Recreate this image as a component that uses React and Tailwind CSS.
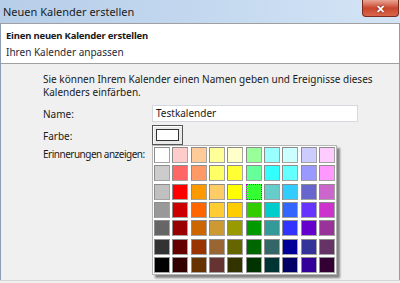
import React from "react";

const rows = [
  ["#ffffff", "#ffcccc", "#ffcc99", "#ffff99", "#ffffcc", "#99ff99", "#99ffff", "#ccffff", "#ccccff", "#ffccff"],
  ["#cccccc", "#ff6666", "#ff9966", "#ffff66", "#ffff33", "#66ff99", "#33ffff", "#66ffff", "#9999ff", "#ff99ff"],
  ["#c0c0c0", "#ff0000", "#ff9900", "#ffcc66", "#ffff00", "#33ff33", "#66cccc", "#33ccff", "#6666cc", "#cc66cc"],
  ["#999999", "#cc0000", "#ff6600", "#ffcc33", "#ffcc00", "#33cc00", "#00cccc", "#3366ff", "#6633ff", "#cc33cc"],
  ["#666666", "#990000", "#cc6600", "#cc9933", "#999900", "#009900", "#339999", "#3333ff", "#6600cc", "#993399"],
  ["#333333", "#660000", "#993300", "#996633", "#666600", "#006600", "#336666", "#000099", "#333399", "#663366"],
  ["#000000", "#330000", "#663300", "#663333", "#333300", "#003300", "#003333", "#000066", "#330099", "#330033"],
];

export default function App() {
  return (
    <div
      className="relative w-[400px] h-[283px] overflow-hidden bg-[#f0f0f0] text-[#1a1a1a]"
      style={{ fontFamily: '"Noto Sans", "Segoe UI", sans-serif' }}
    >
      {/* Title bar */}
      <div className="flex h-[23px] items-start justify-between bg-gradient-to-r from-[#b7cee9] via-[#c3d8ef] to-[#d4e4f5]">
        <span className="pl-[3px] pt-[5px] text-[11px] leading-[14px] text-[#1c1c1c]">
          Neuen Kalender erstellen
        </span>
        <div className="mr-[1px] flex h-[17px] w-[37px] items-center justify-center rounded-b-[4px] border border-t-0 border-[#7a2b1e] bg-gradient-to-b from-[#e8a596] via-[#c9452d] to-[#d8664b] text-[11px] font-bold leading-none text-white [text-shadow:0_0_2px_#5a1a10]">
          ✕
        </div>
      </div>

      {/* Main frame */}
      <div className="flex h-[257px] flex-col border-x border-[#8d9db3]">
        {/* Header */}
        <div className="h-[41px] border-y border-[#a0a0a0] bg-white px-[5px] pt-[4px]">
          <div className="text-[9.5px] font-bold tracking-[-0.2px] leading-[16px]">Einen neuen Kalender erstellen</div>
          <div className="text-[10px] leading-[16px] text-[#1e2a3a]">Ihren Kalender anpassen</div>
        </div>

        {/* Body */}
        <div className="flex-1 pl-[42px] pt-[9px] text-[10px]">
          <p className="leading-[13px]">
            Sie können Ihrem Kalender einen Namen geben und Ereignisse dieses
            <br />
            Kalenders einfärben.
          </p>

          <div className="mt-[6px] flex h-[17px] items-center">
            <span className="w-[109px] pt-[2px] leading-[13px]">Name:</span>
            <div className="flex h-[17px] w-[206px] items-center border border-[#d5d9df] bg-white pl-[3px] leading-[13px]">
              Testkalender
            </div>
          </div>

          <div className="mt-[3px] flex h-[20px] items-center">
            <span className="w-[109px] pt-[2px] leading-[13px]">Farbe:</span>
            <div className="flex h-[20px] w-[31px] items-center justify-center border border-[#555] bg-[#e9e9e9] shadow-[inset_1px_1px_0_#fff]">
              <div className="h-[12px] w-[23px] border border-[#333] bg-white" />
            </div>
          </div>

          <div className="mt-[0px] flex h-[18px] items-center">
            <span className="tracking-[-0.5px] leading-[13px]">Erinnerungen anzeigen:</span>
          </div>
        </div>
      </div>
      <div className="h-[3px] border-t border-[#d5d5d5] bg-[#f0f0f0]" />

      {/* Colour palette dropdown */}
      <div className="absolute left-[152px] top-[145px] border border-[#b5b5b5] bg-white p-[1px] shadow-[3px_3px_2px_rgba(0,0,0,0.45)]">
        <div className="grid grid-cols-[repeat(10,16px)] gap-[2.33px]">
          {rows.flat().map((c, i) =>
            i === 25 ? (
              <div
                key={i}
                className="h-[16px] w-[16px] border border-dotted border-[#c000c0]"
                style={{ backgroundColor: c }}
              />
            ) : (
              <div
                key={i}
                className="h-[16px] w-[16px] border border-[#a4a4a4] border-l-[#8c8c8c] border-t-[#8c8c8c]"
                style={{ backgroundColor: c }}
              />
            )
          )}
        </div>
      </div>
    </div>
  );
}
